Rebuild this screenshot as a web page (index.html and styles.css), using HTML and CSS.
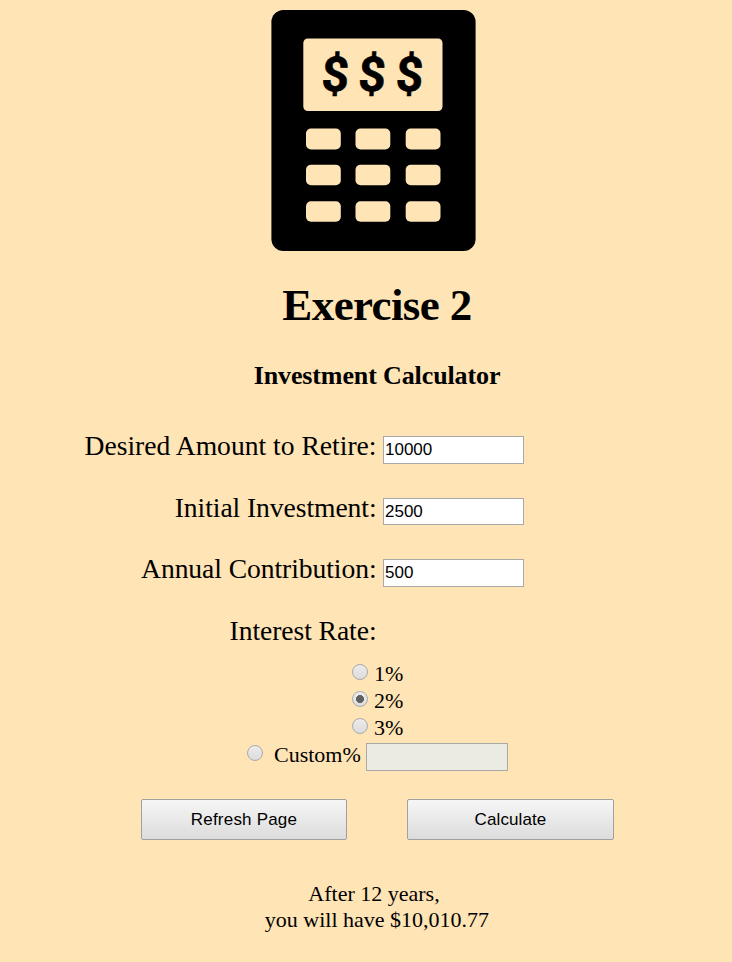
FILE: index.html
```html
<!DOCTYPE html>
<html lang="en">
<head>
<meta charset="utf-8">
<title>Investment Calculator</title>
<link rel="stylesheet" href="styles.css">
</head>
<body>
<main>
  <svg class="logo" viewBox="0 0 206 242" aria-hidden="true">
    <rect x="0.4" y="1" width="204.200" height="241" rx="12"/>
    <rect class="cut" x="32.300" y="29.500" width="139.200" height="72.500" rx="4.500"/>
    <g class="cut">
      <rect x="35" y="119.500" width="34.800" height="21" rx="5"/><rect x="84.500" y="119.500" width="34.800" height="21" rx="5"/><rect x="134.700" y="119.500" width="34.800" height="21" rx="5"/>
      <rect x="35" y="155.700" width="34.800" height="20.500" rx="5"/><rect x="84.500" y="155.700" width="34.800" height="20.500" rx="5"/><rect x="134.700" y="155.700" width="34.800" height="20.500" rx="5"/>
      <rect x="35" y="192.300" width="34.800" height="20.500" rx="5"/><rect x="84.500" y="192.300" width="34.800" height="20.500" rx="5"/><rect x="134.700" y="192.300" width="34.800" height="20.500" rx="5"/>
    </g>
    <g class="money">
      <text transform="translate(63.500 81.500) skewX(-3)">$</text>
      <text transform="translate(100.300 81.500) skewX(-3)">$</text>
      <text transform="translate(137.800 81.500) skewX(-3)">$</text>
    </g>
  </svg>
  <h1>Exercise 2</h1>
  <h3>Investment Calculator</h3>
  <form>
    <div class="row"><label for="a">Desired Amount to Retire:</label><input class="field" id="a" value="10000"></div>
    <div class="row"><label class="tight" for="b">Initial Investment:</label><input class="field short" id="b" value="2500"></div>
    <div class="row"><label class="tight" for="c">Annual Contribution:</label><input class="field" id="c" value="500"></div>
    <div class="row"><label class="tight">Interest Rate:</label></div>
    <div class="rates">
      <label class="rate"><input type="radio" name="r"><span>1%</span></label>
      <label class="rate"><input type="radio" name="r" checked><span>2%</span></label>
      <label class="rate"><input type="radio" name="r"><span>3%</span></label>
      <div class="rate custom"><input type="radio" name="r"><span>Custom%</span><input class="field" disabled></div>
    </div>
    <div class="buttons"><button type="button">Refresh Page</button><button class="calculate" type="button">Calculate</button></div>
  </form>
  <p class="result"><span class="years">After 12 years,</span><br>you will have $10,010.77</p>
</main>
</body>
</html>
```
FILE: styles.css
```css
* { box-sizing: border-box; }
body { margin: 0; height: 962px; overflow: hidden; background: #ffe4b5; color: #000; font-family: "Liberation Serif", serif; }
main { display: flex; flex-direction: column; padding-top: 9px; }
.logo { width: 206px; height: 242px; margin-left: 271px; }
.cut { fill: #ffe4b5; }
.money { font: bold 48px Roboto, sans-serif; text-anchor: middle; stroke: #000; stroke-width: .6px; }
h1, h3 { margin: 0 0 0 22px; text-align: center; }
h1 { margin-top: 27px; font-size: 45px; line-height: 54px; letter-spacing: -0.6px; }
h3 { margin-top: 28px; font-size: 26px; line-height: 32px; letter-spacing: -0.12px; }
form { padding-top: 37px; }
.row { display: flex; align-items: flex-start; height: 61.6px; padding-top: 1px; }
.row label { width: 376.5px; margin-right: .5px; text-align: right; font-size: 27.6px; line-height: 32px; }
.row .tight { letter-spacing: -0.07px; }
.field { width: 141px; height: 28px; margin: 6px 0 0 6px; padding: 0 1px; border: 1px solid #a9a9a9; border-radius: 0; background: #fff; font: 17px "Liberation Sans", sans-serif; color: #000; }
.short { height: 27px; padding-top: 1px; }
.field:disabled { width: 142px; margin: 2px 0 0 5px; background: #ebebe4; }
.rates { margin-top: -15px; }
.rate { display: flex; height: 27px; margin-left: 352px; font-size: 22px; line-height: 28px; }
.rate [type=radio] { appearance: none; flex: none; width: 16px; height: 16px; margin: 4px 6px 0 0; border: 1px solid #aaa; border-radius: 50%; background: linear-gradient(#ececec, #dcdcdc); }
.rate [type=radio]:checked { background: radial-gradient(circle, #606060 0 3.7px, transparent 4.3px), linear-gradient(#ececec, #dcdcdc); }
.custom { margin-left: 247px; }
.rate.custom [type=radio] { margin-right: 11px; }
.buttons { display: flex; gap: 60px; margin: 31px 0 0 141px; }
button { width: 206px; height: 41px; padding: 0; border: 1px solid #a0a0a0; border-radius: 2px; background: linear-gradient(#f6f6f6, #dcdcdc); font: 17px "Liberation Sans", sans-serif; letter-spacing: .2px; color: #000; }
.calculate { width: 207px; letter-spacing: .1px; }
.result { margin: 41px 0 0 22px; text-align: center; font-size: 22px; line-height: 26px; }
.years { margin-right: 6px; }
```
